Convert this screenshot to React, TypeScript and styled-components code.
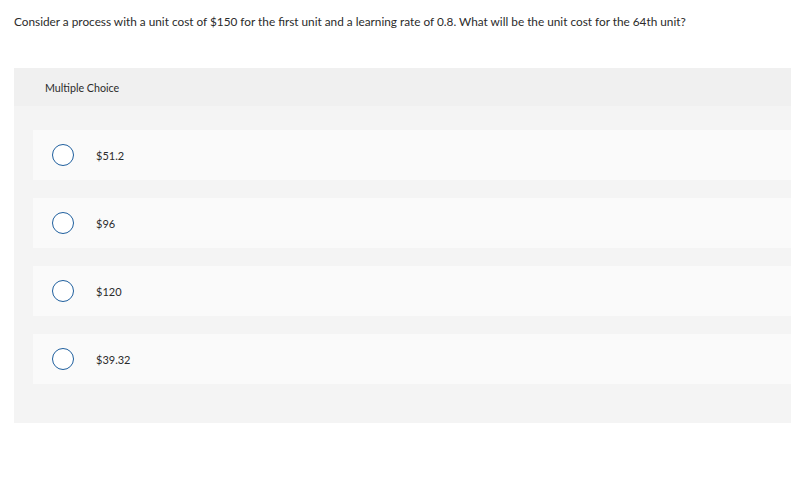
import React from 'react';
import styled, { createGlobalStyle } from 'styled-components';

const GlobalStyle = createGlobalStyle`
  html, body {
    margin: 0;
    padding: 0;
    background: #ffffff;
  }
  body {
    font-family: 'Lato', 'Liberation Sans', Arial, sans-serif;
    color: #333333;
  }
`;

const options = ['$51.2', '$96', '$120', '$39.32'];

const App: React.FC = () => {
  return (
    <>
      <GlobalStyle />
      <Page>
        <Question>
          Consider a process with a unit cost of $150 for the first unit and a learning rate of 0.8.
          What will be the unit cost for the 64th unit?
        </Question>

        <Panel>
          <PanelHeader>Multiple Choice</PanelHeader>
          <OptionList>
            {options.map(option => (
              <Option key={option}>
                <Radio type="radio" name="answer" />
                <OptionLabel>{option}</OptionLabel>
              </Option>
            ))}
          </OptionList>
        </Panel>
      </Page>
    </>
  );
};

const Page = styled.div`
  padding: 14px 0 0 14px;
`;

const Question = styled.p`
  margin: 0 0 38px;
  font-size: 11.8px;
  line-height: 16px;
  color: #2b2b2b;
`;

const Panel = styled.section`
  background: #f4f4f4;
  padding-bottom: 39px;
`;

const PanelHeader = styled.div`
  height: 38px;
  display: flex;
  align-items: center;
  padding-left: 31px;
  background: #f0f0f0;
  font-size: 10.7px;
  color: #2b2b2b;
`;

const OptionList = styled.div`
  display: flex;
  flex-direction: column;
  gap: 18px;
  padding: 24px 0 0 19px;
`;

const Option = styled.label`
  height: 50px;
  display: flex;
  align-items: center;
  background: #fafafa;
  padding-left: 19px;
  cursor: pointer;
`;

const Radio = styled.input`
  appearance: none;
  margin: 0;
  width: 22px;
  height: 22px;
  border: 1.5px solid #1f5f9e;
  border-radius: 50%;
  background: #ffffff;
  box-sizing: border-box;
  flex-shrink: 0;
`;

const OptionLabel = styled.span`
  margin-left: 22px;
  font-size: 11px;
  color: #2b2b2b;
`;

export default App;
